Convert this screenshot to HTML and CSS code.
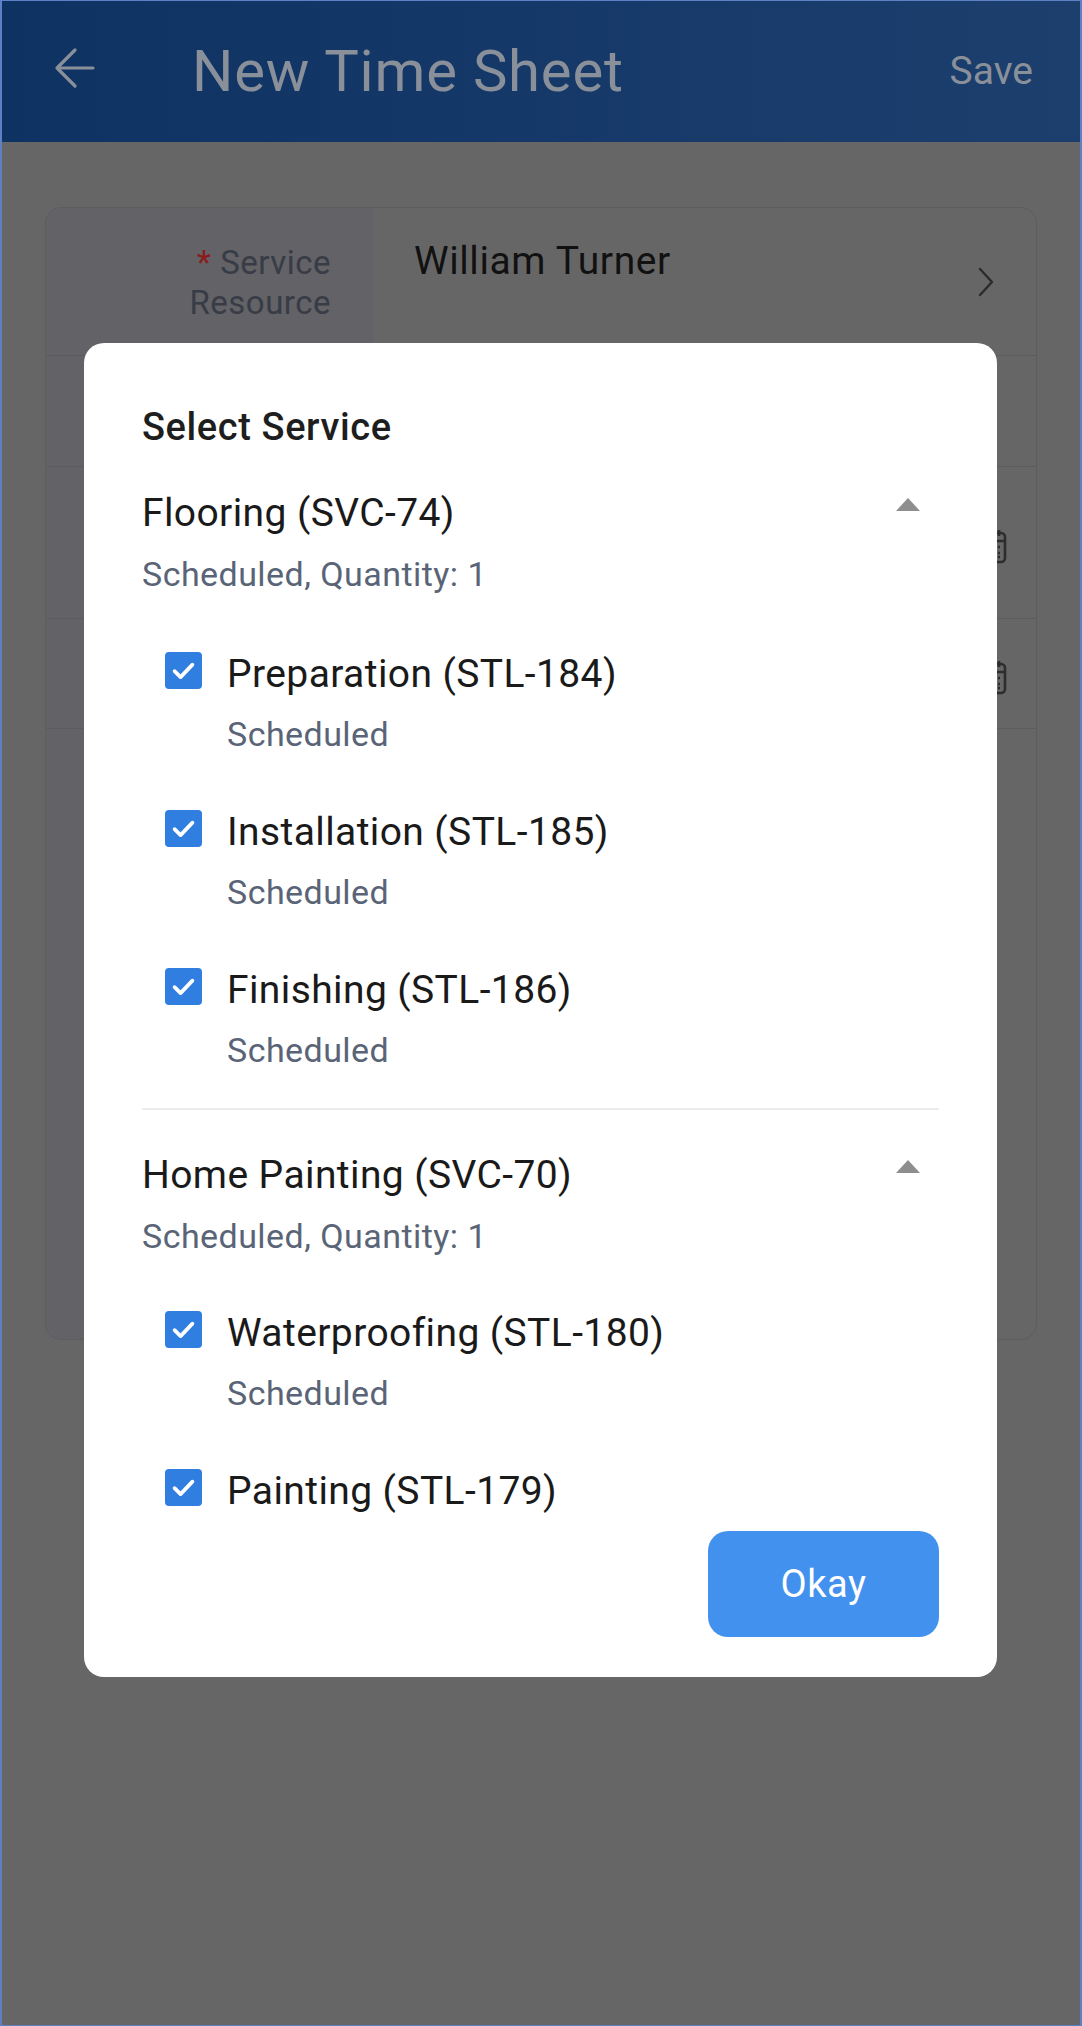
FILE: index.html
```html
<!DOCTYPE html>
<html lang="en">
<head>
    <meta charset="UTF-8">
    <meta name="viewport" content="width=device-width, initial-scale=1.0">
    <title>New Time Sheet</title>
    <link rel="stylesheet" href="styles.css">
</head>
<body>
    <div class="screen">
        <header class="topbar">
            <svg class="back" width="44" height="44" viewBox="0 0 44 44">
                <path d="M41 22H5 M23 4L5 22l18 18" fill="none" stroke="#8a9099" stroke-width="3.2" stroke-linecap="round" stroke-linejoin="round"/>
            </svg>
            <h1 class="title">New Time Sheet</h1>
            <span class="save">Save</span>
        </header>

        <div class="form">
            <div class="row row-resource">
                <div class="label"><span class="req">*</span> Service<br>Resource</div>
                <div class="value">William Turner</div>
                <svg class="chevron" width="16" height="30" viewBox="0 0 16 30">
                    <path d="M2 2l12 13L2 28" fill="none" stroke="#2b2b2b" stroke-width="2.4" stroke-linecap="round" stroke-linejoin="round"/>
                </svg>
            </div>
            <div class="row row-service">
                <div class="label"></div>
                <div class="value"></div>
            </div>
            <div class="row row-start">
                <div class="label"></div>
                <div class="value"></div>
                <svg class="calendar" width="28" height="36" viewBox="0 0 28 36">
                    <rect x="2" y="5" width="24" height="29" rx="4" fill="none" stroke="#2d2d2d" stroke-width="2.6"/>
                    <path d="M8 2v6 M20 2v6 M2 13h24" stroke="#2d2d2d" stroke-width="2.6"/>
                    <path d="M19 19h2 M19 25h2 M19 29h2" stroke="#2d2d2d" stroke-width="2.4"/>
                </svg>
            </div>
            <div class="row row-end">
                <div class="label"></div>
                <div class="value"></div>
                <svg class="calendar" width="28" height="36" viewBox="0 0 28 36">
                    <rect x="2" y="5" width="24" height="29" rx="4" fill="none" stroke="#2d2d2d" stroke-width="2.6"/>
                    <path d="M8 2v6 M20 2v6 M2 13h24" stroke="#2d2d2d" stroke-width="2.6"/>
                    <path d="M19 19h2 M19 25h2 M19 29h2" stroke="#2d2d2d" stroke-width="2.4"/>
                </svg>
            </div>
            <div class="row row-fill">
                <div class="label"></div>
            </div>
        </div>
    </div>

    <div class="dialog">
        <h2 class="dialog-title">Select Service</h2>
        <div class="list">
            <div class="group">
                <div class="group-head">
                    <div class="group-name">Flooring (SVC-74)</div>
                    <span class="caret"></span>
                </div>
                <div class="meta">Scheduled, Quantity: 1</div>
                <div class="items">
                    <div class="item">
                        <span class="check"><svg width="37" height="37" viewBox="0 0 24 24"><path d="M6.2 12.4l3.9 3.9 7.7-8.1" fill="none" stroke="#fff" stroke-width="2.4" stroke-linecap="round" stroke-linejoin="round"/></svg></span>
                        <div>
                            <div class="item-name">Preparation (STL-184)</div>
                            <div class="meta item-meta">Scheduled</div>
                        </div>
                    </div>
                    <div class="item">
                        <span class="check"><svg width="37" height="37" viewBox="0 0 24 24"><path d="M6.2 12.4l3.9 3.9 7.7-8.1" fill="none" stroke="#fff" stroke-width="2.4" stroke-linecap="round" stroke-linejoin="round"/></svg></span>
                        <div>
                            <div class="item-name">Installation (STL-185)</div>
                            <div class="meta item-meta">Scheduled</div>
                        </div>
                    </div>
                    <div class="item">
                        <span class="check"><svg width="37" height="37" viewBox="0 0 24 24"><path d="M6.2 12.4l3.9 3.9 7.7-8.1" fill="none" stroke="#fff" stroke-width="2.4" stroke-linecap="round" stroke-linejoin="round"/></svg></span>
                        <div>
                            <div class="item-name">Finishing (STL-186)</div>
                            <div class="meta item-meta">Scheduled</div>
                        </div>
                    </div>
                </div>
            </div>
            <div class="group">
                <div class="group-head">
                    <div class="group-name">Home Painting (SVC-70)</div>
                    <span class="caret"></span>
                </div>
                <div class="meta">Scheduled, Quantity: 1</div>
                <div class="items">
                    <div class="item">
                        <span class="check"><svg width="37" height="37" viewBox="0 0 24 24"><path d="M6.2 12.4l3.9 3.9 7.7-8.1" fill="none" stroke="#fff" stroke-width="2.4" stroke-linecap="round" stroke-linejoin="round"/></svg></span>
                        <div>
                            <div class="item-name">Waterproofing (STL-180)</div>
                            <div class="meta item-meta">Scheduled</div>
                        </div>
                    </div>
                    <div class="item">
                        <span class="check"><svg width="37" height="37" viewBox="0 0 24 24"><path d="M6.2 12.4l3.9 3.9 7.7-8.1" fill="none" stroke="#fff" stroke-width="2.4" stroke-linecap="round" stroke-linejoin="round"/></svg></span>
                        <div>
                            <div class="item-name">Painting (STL-179)</div>
                        </div>
                    </div>
                </div>
            </div>
        </div>
        <div class="actions">
            <button class="okay">Okay</button>
        </div>
    </div>
</body>
</html>
```

FILE: styles.css
```css
body {
    margin: 0;
    background: #666666;
    font-family: Roboto, "Liberation Sans", sans-serif;
}

body::after {
    content: "";
    position: fixed;
    top: 0;
    left: 0;
    right: 0;
    bottom: 0;
    border-style: solid;
    border-color: #5d81c5;
    border-width: 1px 2px;
    pointer-events: none;
}

.screen {
    height: 2026px;
}

/* top bar */
.topbar {
    height: 142px;
    display: flex;
    align-items: center;
    padding: 0 49px 0 52px;
    background: linear-gradient(90deg, #0e3262, #1c3f6e);
}

.back {
    margin-top: -6px;
}

.title {
    margin: 0 0 0 96px;
    font-size: 58px;
    font-weight: normal;
    letter-spacing: 0.8px;
    color: #8a9099;
}

.save {
    margin-left: auto;
    font-size: 39px;
    color: #8a9099;
}

/* form card behind the dialog */
.form {
    margin: 65px 45px 0;
    height: 1133px;
    box-sizing: border-box;
    border: 1px solid #5d5d5f;
    border-radius: 16px;
    overflow: hidden;
    display: flex;
    flex-direction: column;
}

.row {
    display: flex;
    border-bottom: 1px solid #5c5c5e;
    box-sizing: border-box;
}

.row-resource { height: 148px; }
.row-service { height: 111px; }
.row-start { height: 152px; }
.row-end { height: 110px; }

.row-fill {
    flex: 1;
    border-bottom: none;
}

.label {
    width: 327px;
    flex: none;
    box-sizing: border-box;
    padding: 35px 42px 0 0;
    background: #626267;
    text-align: right;
    font-size: 33px;
    line-height: 40px;
    letter-spacing: 0.5px;
    color: #383c46;
}

.req {
    color: #8a1c1c;
}

.value {
    flex: 1;
    padding: 30px 0 0 41px;
    font-size: 39px;
    line-height: 46px;
    letter-spacing: 0.6px;
    color: #111111;
}

.chevron {
    align-self: center;
    margin-right: 42px;
}

.calendar {
    align-self: center;
    margin: 6px 29px 0 0;
}

/* dialog */
.dialog {
    position: absolute;
    left: 84px;
    top: 343px;
    width: 913px;
    box-sizing: border-box;
    padding: 62px 58px 40px;
    background: #ffffff;
    border-radius: 20px;
}

.dialog-title {
    margin: 0;
    font-size: 38px;
    line-height: 44px;
    font-weight: 500;
    letter-spacing: 0.6px;
    color: #1e1e1e;
}

.list {
    height: 1076px;
    overflow: hidden;
}

.group {
    padding: 41px 0 38px;
    border-bottom: 2px solid #ececec;
}

.group + .group {
    padding-top: 42px;
    border-bottom: none;
}

.group-head {
    display: flex;
}

.group-name,
.item-name {
    font-size: 39px;
    line-height: 46px;
    letter-spacing: 0.4px;
    color: #1a1a1a;
}

.caret {
    margin: 8px 19px 0 auto;
    width: 0;
    height: 0;
    border-left: 12.5px solid transparent;
    border-right: 12.5px solid transparent;
    border-bottom: 13px solid #8e8e8e;
}

.meta {
    margin-top: 18px;
    font-size: 34px;
    line-height: 40px;
    letter-spacing: 0.45px;
    color: #5a6477;
}

.items {
    padding-left: 23px;
}

.item {
    display: flex;
    gap: 25px;
    margin-top: 57px;
}

.group + .group .item:first-child {
    margin-top: 54px;
}

.item + .item {
    margin-top: 55px;
}

.item-meta {
    margin-top: 17px;
}

.check {
    width: 37px;
    height: 37px;
    flex: none;
    margin-top: 1px;
    border-radius: 4px;
    background: #2f7ee0;
}

.check svg {
    display: block;
}

.actions {
    display: flex;
    justify-content: flex-end;
    margin-top: 6px;
}

.okay {
    width: 231px;
    height: 106px;
    border: none;
    border-radius: 20px;
    background: #4291ef;
    color: #ffffff;
    font-family: Roboto, "Liberation Sans", sans-serif;
    font-size: 38px;
    letter-spacing: 0.5px;
}
```
